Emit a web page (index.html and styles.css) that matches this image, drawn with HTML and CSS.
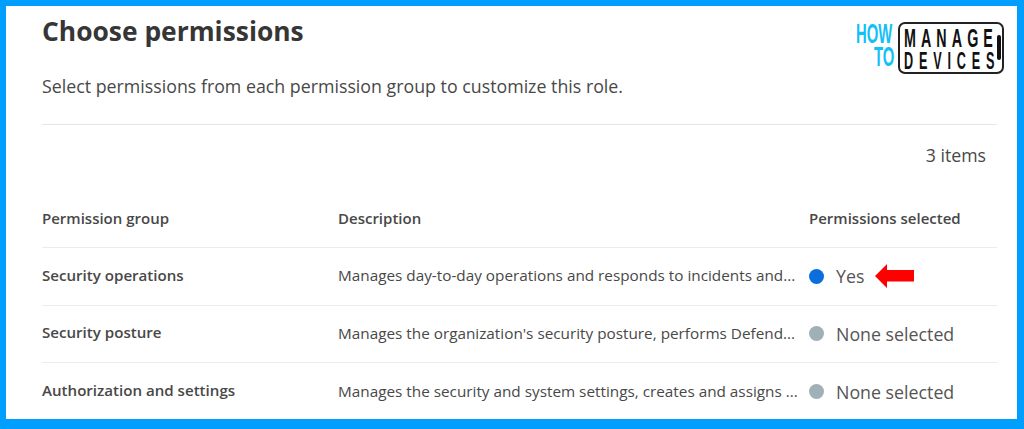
FILE: index.html
```html
<!DOCTYPE html>
<html lang="en">
<head>
<meta charset="utf-8">
<title>Choose permissions</title>
<link rel="stylesheet" href="styles.css">
</head>
<body>
<main class="frame">
  <h1 class="title">Choose permissions</h1>
  <p class="intro">Select permissions from each permission group to customize this role.</p>
  <div class="count">3 items</div>
  <div class="table">
    <div class="row head">
      <div>Permission group</div>
      <div>Description</div>
      <div>Permissions selected</div>
    </div>
    <div class="row">
      <div class="name">Security operations</div>
      <div class="desc">Manages day-to-day operations and responds to incidents and...</div>
      <div class="status"><span class="dot on"></span>Yes
        <svg class="arrow" width="40" height="24" viewBox="0 0 40 24"><path d="M0 12 12 0V6H39V17.500H12V24Z" fill="#f00"/></svg>
      </div>
    </div>
    <div class="row">
      <div class="name">Security posture</div>
      <div class="desc">Manages the organization's security posture, performs Defend...</div>
      <div class="status"><span class="dot"></span>None selected</div>
    </div>
    <div class="row last">
      <div class="name">Authorization and settings</div>
      <div class="desc">Manages the security and system settings, creates and assigns ...</div>
      <div class="status"><span class="dot"></span>None selected</div>
    </div>
  </div>
  <div class="logo">
    <div class="how"><span class="how-1">HOW</span><span class="how-2">TO</span></div>
    <div class="phone"><span class="manage">MANAGE</span><span class="devices">DEVICES</span></div>
  </div>
</main>
</body>
</html>
```
FILE: styles.css
```css
* { box-sizing: border-box; }
html, body { margin: 0; height: 100%; }
body { background: #fff; overflow: hidden; }
.frame {
  position: relative;
  width: 1024px;
  height: 429px;
  border: solid #009eff;
  border-width: 6px 7px 10px 6px;
  padding: 7px 20px 0 36px;
  background: #fff;
  color: #484848;
  font-family: "Open Sans", "Noto Sans", sans-serif;
  overflow: hidden;
}
.title {
  margin: 0;
  font-size: 26.400px;
  line-height: 36px;
  font-weight: 700;
  color: #363636;
}
.intro {
  margin: 25px 0 0;
  font-size: 17.800px;
  line-height: 24px;
  height: 51px;
  border-bottom: 1px solid #e6e6e6;
}
.count {
  margin-top: 18px;
  padding-right: 11px;
  text-align: right;
  font-size: 17.700px;
  line-height: 24px;
}
.table { margin-top: 30px; }
.row {
  display: grid;
  grid-template-columns: 296px 471px 1fr;
  align-items: center;
  height: 57.500px;
  border-bottom: 1px solid #ececec;
}
.head { height: 51px; font-weight: 600; font-size: 15px; padding-bottom: 8px; }
.last { border-bottom: 0; }
.name { font-weight: 600; font-size: 15.100px; padding-bottom: 3px; }
.desc { font-size: 15.300px; padding-bottom: 2px; white-space: nowrap; overflow: hidden; }
.status {
  display: flex;
  align-items: center;
  font-size: 17.800px;
  color: #555;
}
.dot {
  width: 15px;
  height: 15px;
  margin-right: 12px;
  border-radius: 50%;
  background: #9fb0b6;
}
.dot.on { background: #0a6fdc; }
.arrow { margin-left: 11px; }
.logo {
  position: absolute;
  top: 16px;
  left: 850px;
  width: 148px;
  height: 52px;
  display: flex;
  justify-content: space-between;
  font-family: "Liberation Sans", Arial, sans-serif;
  font-weight: 700;
}
.how {
  display: flex;
  flex-direction: column;
  width: 36px;
  padding-top: 1px;
  font-size: 27px;
  line-height: 23px;
  color: #12c0f5;
  white-space: nowrap;
}
.how-1, .how-2 { display: block; width: max-content; transform-origin: left center; }
.how-1 { transform: scaleX(.55); }
.how-2 { transform: translateX(18px) scaleX(.55); }
.phone {
  position: relative;
  display: flex;
  flex-direction: column;
  width: 106px;
  height: 52px;
  padding: 2px 0 0 4px;
  border: 2px solid #222;
  border-radius: 7px;
  color: #111;
  white-space: nowrap;
}
.phone::after {
  content: "";
  position: absolute;
  right: 1px;
  top: 11px;
  width: 4px;
  height: 25px;
  background: #111;
  border-radius: 2px;
}
.manage, .devices { display: block; width: max-content; transform-origin: left center; transform: scaleX(.55); }
.manage { font-size: 26px; line-height: 24px; letter-spacing: 9.200px; }
.devices { font-size: 23px; line-height: 22px; letter-spacing: 10.600px; }
```
